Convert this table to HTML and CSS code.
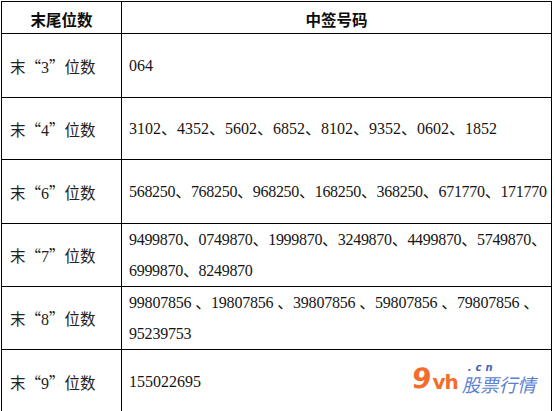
FILE: index.html
```html
<!DOCTYPE html>
<html lang="zh-CN">
<head>
<meta charset="utf-8">
<title>中签号码</title>
<link rel="stylesheet" href="styles.css">
</head>
<body>
<div class="page">
<table class="lottery">
  <colgroup><col class="col-a"><col class="col-b"></colgroup>
  <thead>
    <tr class="h-head"><th>末尾位数</th><th>中签号码</th></tr>
  </thead>
  <tbody>
    <tr class="h64"><td class="label">末“<span class="d">3</span>”位数</td><td class="nums">064</td></tr>
    <tr class="h62"><td class="label">末“<span class="d">4</span>”位数</td><td class="nums">3102、4352、5602、6852、8102、9352、0602、1852</td></tr>
    <tr class="h64"><td class="label">末“<span class="d">6</span>”位数</td><td class="nums tight">568250、768250、968250、168250、368250、671770、171770</td></tr>
    <tr class="h62"><td class="label">末“<span class="d">7</span>”位数</td><td class="nums multi tight">9499870、0749870、1999870、3249870、4499870、5749870、<br>6999870、8249870</td></tr>
    <tr class="h63"><td class="label">末“<span class="d">8</span>”位数</td><td class="nums multi semi">99807856 、19807856 、39807856 、59807856 、79807856 、<br>95239753</td></tr>
    <tr class="h64"><td class="label">末“<span class="d">9</span>”位数</td><td class="nums">155022695</td></tr>
  </tbody>
</table>
<div class="watermark">
  <span class="wm-nine">9</span><span class="wm-vh">vh</span><span class="wm-right"><span class="wm-cn">.cn</span><span class="wm-cjk">股票行情</span></span>
</div>
</div>
</body>
</html>
```
FILE: styles.css
```css
html, body {
  margin: 0;
  padding: 0;
  background: #ffffff;
}
.page {
  position: relative;
  width: 555px;
  height: 411px;
  overflow: hidden;
  padding: 1px 0 0 1px;
  box-sizing: border-box;
}
.lottery {
  border-collapse: collapse;
  table-layout: fixed;
  width: 550px;
  color: #151515;
}
.col-a { width: 120px; }
.col-b { width: 430px; }
.lottery th,
.lottery td {
  border: 1px solid #000;
  padding: 0;
}
.lottery th {
  font-family: "Noto Sans CJK SC", sans-serif;
  font-weight: 700;
  font-size: 15.5px;
  text-align: center;
  vertical-align: middle;
  padding-top: 2px;
  line-height: 20px;
  color: #0d0d0d;
}
.h-head { height: 32px; }
.h64 { height: 64px; }
.h62 { height: 62px; }
.h63 { height: 63px; }
.label {
  font-family: "Noto Sans CJK SC", sans-serif;
  font-weight: 400;
  font-size: 15.5px;
  padding-left: 8px !important;
  vertical-align: middle;
  white-space: nowrap;
  color: #222;
}
.label .d {
  font-family: "Liberation Serif", serif;
  font-size: 16px;
}
.nums {
  font-family: "Liberation Serif", "Noto Sans CJK SC", serif;
  font-size: 16px;
  padding-left: 7px !important;
  vertical-align: middle;
  white-space: nowrap;
  line-height: 20px;
}
.nums.tight {
  letter-spacing: -0.3px;
}
.nums.semi {
  letter-spacing: -0.2px;
}
.nums.multi {
  line-height: 31px;
}
.watermark {
  position: absolute;
  left: 412px;
  top: 361px;
  display: flex;
  align-items: flex-end;
  height: 32px;
}
.wm-nine {
  font-family: "DejaVu Sans", sans-serif;
  font-weight: 700;
  font-size: 28px;
  line-height: 28px;
  color: #f46d2c;
  transform: skewX(-6deg);
}
.wm-vh {
  font-family: "DejaVu Sans", sans-serif;
  font-weight: 700;
  font-size: 20px;
  line-height: 22px;
  color: #f46d2c;
  letter-spacing: -1px;
  margin-left: 1px;
}
.wm-right {
  display: flex;
  flex-direction: column;
  margin-left: 4px;
}
.wm-cn {
  font-family: "DejaVu Sans", sans-serif;
  font-weight: 700;
  font-style: italic;
  font-size: 10px;
  line-height: 9px;
  letter-spacing: 4px;
  color: #4a5fb8;
  margin-left: 6px;
  margin-bottom: 3px;
}
.wm-cjk {
  font-family: "Noto Sans CJK SC", sans-serif;
  font-style: italic;
  font-size: 18.5px;
  line-height: 18px;
  color: #5b7fd2;
}
```
